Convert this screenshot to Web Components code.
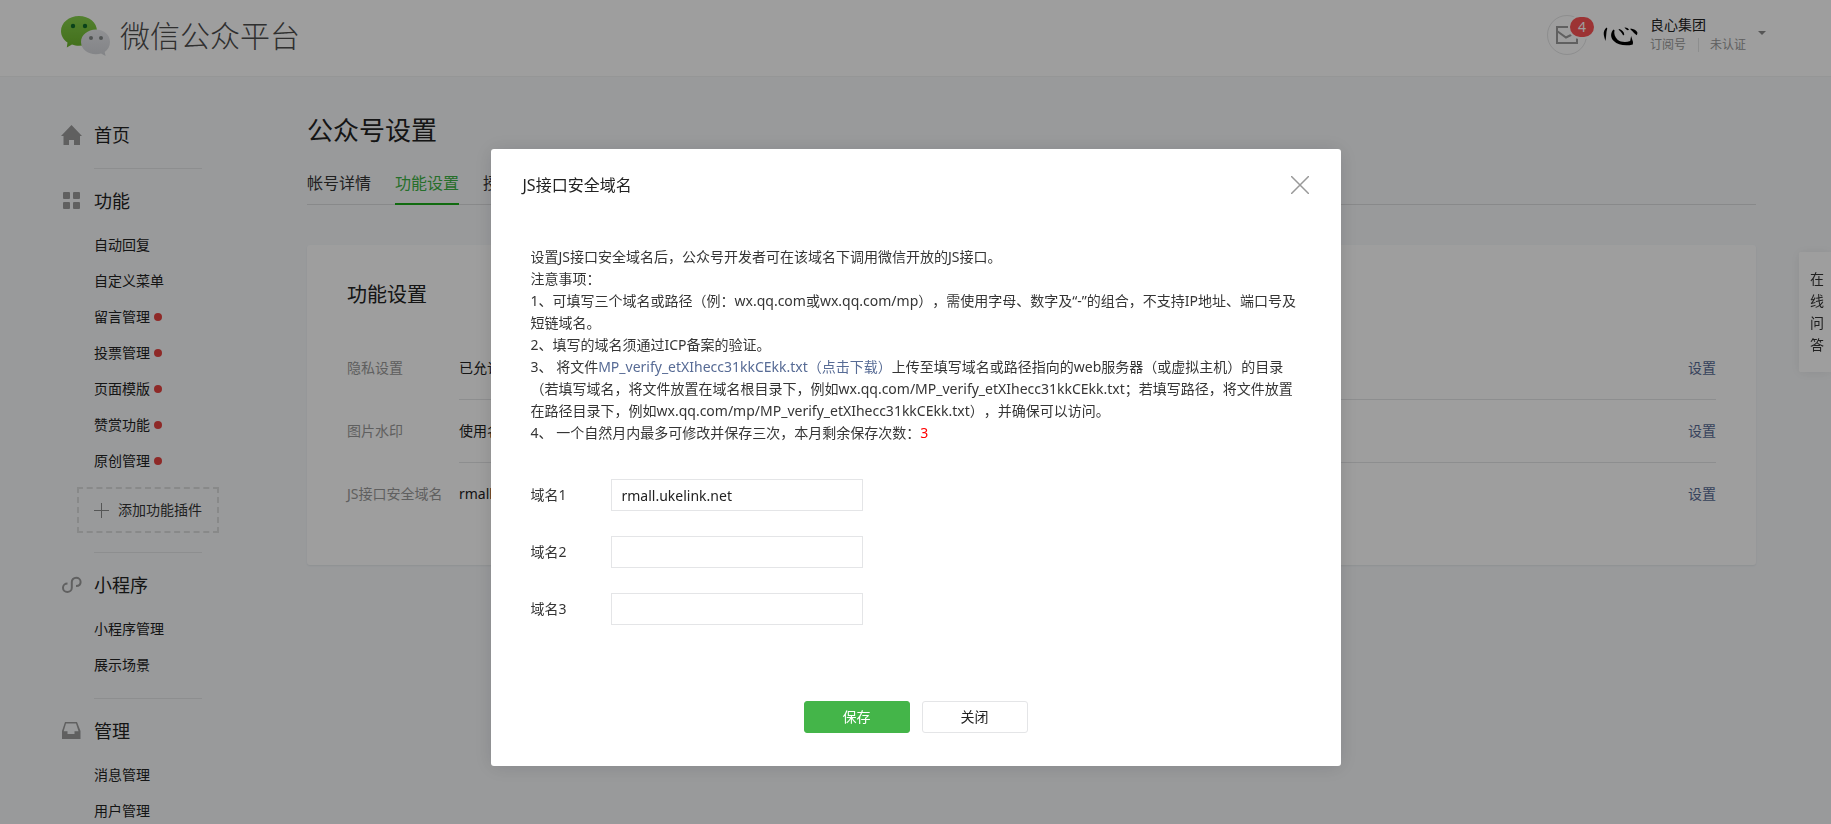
<!DOCTYPE html>
<html lang="zh-CN">
<head>
<meta charset="utf-8">
<title>公众号设置</title>
<style>
  :root {
    --text: #222;
    --body: #353535;
    --muted: #9a9a9a;
    --line: #e4e5e6;
    --green: #44b549;
    --link: #576b95;
  }
  html, body { height: 100%; }
  body {
    margin: 0;
    overflow: hidden;
    background: #f7f9fb;
    color: var(--text);
    font: 14px/22px "Noto Sans", "Noto Sans CJK SC", sans-serif;
    text-spacing-trim: space-all;
  }
</style>
</head>
<body>
<mp-app></mp-app>

<script>
function define(name, html, setup) {
  const template = document.createElement('template');
  template.innerHTML = '<style>*{box-sizing:border-box}a{color:inherit;text-decoration:none}button,input{font:inherit;color:inherit}</style>' + html;
  customElements.define(name, class extends HTMLElement {
    constructor() {
      super();
      this.attachShadow({ mode: 'open' }).append(template.content.cloneNode(true));
    }
    connectedCallback() {
      if (setup) setup(this, this.shadowRoot);
    }
  });
}

/* Product logo with its name */
define('mp-logo', `
  <style>
    :host { display: block; }
    a { display: flex; align-items: center; gap: 9px; color: #4c4c4c; font-size: 30px; line-height: 42px; font-weight: 300; }
    svg { display: block; }
  </style>
  <a href="#">
    <svg width="50" height="41" viewBox="0 0 50 41" aria-hidden="true">
      <defs>
        <linearGradient id="g" x1="0" y1="0" x2="0" y2="1"><stop offset="0" stop-color="#86d04c"/><stop offset="1" stop-color="#6cb52c"/></linearGradient>
        <linearGradient id="w" x1="0" y1="0" x2="0" y2="1"><stop offset="0" stop-color="#e9eaee"/><stop offset="1" stop-color="#d3d5da"/></linearGradient>
      </defs>
      <path d="M18 0C8 0 0 6.700 0 15c0 4.700 2.500 8.800 6.500 11.500L5.800 31.500l5.200-3c2.200.9 4.600 1.300 7 1.300 10 0 18-6.700 18-14.900S28 0 18 0z" fill="url(#g)"/>
      <circle cx="12" cy="10" r="2.200" fill="#116b2a"/><circle cx="24" cy="10" r="2.200" fill="#116b2a"/>
      <path d="M35 13.500c-8.300 0-15 5.600-15 12.400s6.700 12.300 15 12.300c1.800 0 3.500-.2 5.100-.7l4.500 2.500-.9-4.100c3.300-2.300 5.300-5.900 5.300-10 0-6.800-5.700-12.400-14-12.400z" fill="url(#w)"/>
      <circle cx="30" cy="22" r="2" fill="#848888"/><circle cx="40" cy="22" r="2" fill="#848888"/>
    </svg>
    <span>微信公众平台</span>
  </a>`);

/* Message button with an unread count */
define('mp-inbox', `
  <style>
    :host { display: block; position: relative; }
    button { display: block; width: 40px; height: 40px; padding: 0; border: 1px solid #e4e5e6; border-radius: 50%; background: #fff; }
    svg { display: block; margin: 0 auto; }
    span { position: absolute; left: 23px; top: 2px; min-width: 24px; height: 20px; border-radius: 10px; box-shadow: 0 0 0 2px #fff;
      background: #fc5355; color: #fff; font-size: 14px; line-height: 20px; text-align: center; }
  </style>
  <button aria-label="消息">
    <svg width="24" height="20" viewBox="0 0 24 20" fill="none" stroke="#9b9b9b" stroke-width="2">
      <path d="M13 2H2v16h20v-5M2 6l9 6.500L18 9"/>
    </svg>
  </button>
  <span><slot></slot></span>`);

define('mp-account', `
  <style>
    :host { display: flex; align-items: center; }
    .avatar { display: block; margin: 0 12px 0 15px; }
    .name { line-height: 20px; }
    .meta { display: flex; color: var(--muted); font-size: 12px; line-height: 20px; }
    .meta span + span { margin-left: 12px; padding-left: 12px; background: linear-gradient(var(--line), var(--line)) 0 3px / 1px 14px no-repeat; }
    button { align-self: flex-start; margin: 16px 0 0 12px; padding: 0; border: 0; background: none; }
    button svg { display: block; }
  </style>
  <mp-inbox>4</mp-inbox>
  <svg class="avatar" width="36" height="36" viewBox="0 0 36 36" role="img" aria-label="头像">
    <path d="M4.500 10.500C2.500 12 1.300 15 1.800 18l1.500 6C4.600 20.500 3.800 15 5.300 11.500z"/>
    <path d="M11.500 12.500c-3.200 3.200-3.200 8 .3 11.600 4.200 4.200 12.200 5.200 19 3.400l.2-2.500-1.900-6-.9 5c-4.400 1.700-9.700 1.100-12.600-1.300-2.900-2.500-3.800-6-3.100-9.400z"/>
    <path d="M17 12c2.800.8 5 2.600 5.300 5.600l-1.200.9c-.8-1.900-1.900-3.900-4.500-5.800zM22.500 10.500c1.800-.2 3.500.6 4.500 2l-1 .8c-1.200-.3-2.600-1.300-3.500-2.800zM28.500 11.500c3 .2 6 1.900 7 4.200l-.6 2.600c-2-.7-3.500-3.600-6.400-5.700z"/>
  </svg>
  <div>
    <div class="name">良心集团</div>
    <div class="meta"><span>订阅号</span><span>未认证</span></div>
  </div>
  <button aria-label="帐号菜单"><svg width="8" height="4" viewBox="0 0 8 4"><path d="M0 0h8L4 4z" fill="#8b8b8b"/></svg></button>`);

define('mp-header', `
  <style>
    :host { display: flex; justify-content: space-between; height: 77px; padding: 15px 65px 0 61px;
      background: #fff; border-bottom: 1px solid #f0f3f2; box-sizing: border-box; align-items: flex-start; }
  </style>
  <mp-logo></mp-logo>
  <mp-account></mp-account>`);

/* Navigation group: icon and title, then its links */
define('nav-group', `
  <style>
    :host { display: block; padding-top: 19px; }
    a { display: flex; align-items: center; gap: 12px; font-size: 18px; line-height: 26px; }
    a ::slotted(svg) { display: block; flex: none; width: 21px; }
    .links { display: block; margin: 13px 0 0 33px; padding-bottom: 15px; border-bottom: 1px solid #e4e5e7; }
    :host([plain]) .links { margin-top: 0; padding-bottom: 20px; }
    :host([extra]) .links { padding-bottom: 19px; }
  </style>
  <a href="#"><slot name="icon"></slot><span></span></a>
  <div class="links"><slot></slot></div>`,
  (el, root) => { root.querySelector('span').textContent = el.getAttribute('heading'); });

define('nav-link', `
  <style>
    :host { display: block; }
    a { display: flex; align-items: center; gap: 4px; line-height: 36px; }
    :host([unread]) a::after { content: ""; width: 8px; height: 8px; border-radius: 50%; background: #e64340; }
  </style>
  <a href="#"><slot></slot></a>`);

define('nav-add', `
  <style>
    :host { display: block; margin: 8px -17px 0; }
    button { display: flex; align-items: center; gap: 9px; width: 100%; height: 46px; padding: 0 0 0 15px;
      border: 2px dashed #dcddde; background: none; white-space: nowrap; color: #353535; }
    svg { display: block; }
  </style>
  <button><svg width="15" height="15" viewBox="0 0 15 15"><path d="M7 0h1v15H7zM0 7h15v1H0z" fill="#8a8b8c"/></svg><slot></slot></button>`);

define('side-nav', `
  <style>
    :host { display: block; width: 141px; padding-top: 26px; }
  </style>
  <nav>
    <nav-group heading="首页" plain>
      <svg slot="icon" width="21" height="20" viewBox="0 0 21 20" fill="#9b9b9b"><path d="M10.500 0 21 11h-2v9h-6v-5H8v5H2.500v-9H0z"/></svg>
    </nav-group>
    <nav-group heading="功能" extra>
      <svg slot="icon" width="21" height="18" viewBox="0 0 21 18" fill="#9b9b9b"><rect x="2" y="0" width="7" height="7" rx="1"/><rect x="12" y="0" width="7" height="7" rx="1"/><rect x="2" y="10" width="7" height="7" rx="1"/><rect x="12" y="10" width="7" height="7" rx="1"/></svg>
      <nav-link>自动回复</nav-link>
      <nav-link>自定义菜单</nav-link>
      <nav-link unread>留言管理</nav-link>
      <nav-link unread>投票管理</nav-link>
      <nav-link unread>页面模版</nav-link>
      <nav-link unread>赞赏功能</nav-link>
      <nav-link unread>原创管理</nav-link>
      <nav-add>添加功能插件</nav-add>
    </nav-group>
    <nav-group heading="小程序">
      <svg slot="icon" width="21" height="18" viewBox="0 0 21 18" fill="none" stroke="#9b9b9b" stroke-width="2"><path d="M6.500 7.500C4 7.500 2 9.200 2 11.700S4 16 6.300 16s4.500-1.800 4.500-4.200V6c0-2.300 1.800-4.200 4.300-4.200S19.600 3.500 19.600 6s-2 4-4.600 4"/></svg>
      <nav-link>小程序管理</nav-link>
      <nav-link>展示场景</nav-link>
    </nav-group>
    <nav-group heading="管理">
      <svg slot="icon" width="21" height="18" viewBox="0 0 21 18" fill="#9b9b9b"><path fill-rule="evenodd" d="M4 0h12l3.500 9v8H1V9zm1 1.500L2.700 9.200H6.500V12h7V9.200h4L15 1.500z"/></svg>
      <nav-link>消息管理</nav-link>
      <nav-link>用户管理</nav-link>
    </nav-group>
  </nav>`);

define('tab-link', `
  <style>
    :host { display: block; }
    a { display: block; height: 32px; font-size: 16px; line-height: 21px; color: #353535; }
    :host([active]) a { color: #3eb345; border-bottom: 2px solid #1aad19; }
  </style>
  <a href="#"><slot></slot></a>`);

define('setting-row', `
  <style>
    :host { display: flex; line-height: 62px; }
    .label { flex: none; width: 112px; color: var(--muted); }
    .body { flex: 1; display: flex; justify-content: space-between; border-bottom: 1px solid #e4e5e7; }
    :host(:last-of-type) .body { border-color: transparent; }
    a { color: var(--link); }
  </style>
  <span class="label"></span>
  <div class="body"><slot></slot><a href="#">设置</a></div>`,
  (el, root) => { root.querySelector('.label').textContent = el.getAttribute('label'); });

define('settings-page', `
  <style>
    :host { display: block; padding-top: 35px; }
    h1 { margin: 0; font-size: 26px; line-height: 36px; font-weight: 400; }
    .tabs { display: flex; gap: 24px; margin-top: 25px; height: 32px; box-shadow: inset 0 -1px #dcdddf; }
    section { margin-top: 40px; padding: 35px 40px 39px; background: #fff; border-radius: 3px; box-shadow: 0 1px 2px #e4e8eb; }
    h2 { margin: 0 0 27px; font-size: 20px; line-height: 30px; font-weight: 400; }
  </style>
  <h1>公众号设置</h1>
  <nav class="tabs">
    <tab-link>帐号详情</tab-link>
    <tab-link active>功能设置</tab-link>
    <tab-link>授权</tab-link>
  </nav>
  <section>
    <h2>功能设置</h2>
    <setting-row label="隐私设置">已允许</setting-row>
    <setting-row label="图片水印">使用名称</setting-row>
    <setting-row label="JS接口安全域名">rmall.ukelink.net</setting-row>
  </section>`);

define('help-tab', `
  <style>
    :host { display: block; position: fixed; right: 0; top: 252px; }
    button { display: block; width: 32px; padding: 16px 7px 16px 11px; border: 0; border-radius: 2px 0 0 2px;
      background: #fff; box-shadow: 0 1px 12px rgba(0, 0, 0, .08); line-height: 22px; color: #353535; }
  </style>
  <button><slot></slot></button>`);

define('text-field', `
  <style>
    :host { display: flex; align-items: center; }
    label { flex: none; width: 80px; color: var(--body); }
    input { width: 252px; height: 32px; padding: 0 10px; border: 1px solid #e4e5e7; background: #fff; outline: none; }
  </style>
  <label for="input"></label>
  <input id="input" type="text">`,
  (el, root) => {
    root.querySelector('label').textContent = el.getAttribute('label');
    root.querySelector('input').value = el.getAttribute('value') || '';
  });

define('push-button', `
  <style>
    :host { display: block; }
    button { display: block; width: 106px; height: 32px; padding: 0; border: 1px solid #e4e5e7; border-radius: 3px; background: #fff; }
    :host([primary]) button { border-color: var(--green); background: var(--green); color: #fff; }
  </style>
  <button><slot></slot></button>`);

define('modal-dialog', `
  <style>
    :host { display: block; position: fixed; inset: 0; background: rgba(0, 0, 0, .38); overflow: auto; }
    .panel { max-width: 850px; margin: 149px auto 0; background: #fff; border-radius: 3px; box-shadow: 0 1px 20px rgba(0, 0, 0, .13); }
    header { display: flex; justify-content: space-between; align-items: center; height: 72px; padding: 0 32px; }
    h3 { margin: 0; font-size: 16px; line-height: 24px; font-weight: 400; }
    header button { padding: 0; border: 0; background: none; }
    header svg { display: block; }
    .content { padding: 25px 40px 0; }
    footer { display: flex; justify-content: center; gap: 12px; padding: 76px 0 33px; }
  </style>
  <div class="panel" role="dialog" aria-labelledby="title">
    <header>
      <h3 id="title"></h3>
      <button aria-label="关闭"><svg width="18" height="18" viewBox="0 0 18 18"><path d="M0 0l18 18M18 0L0 18" stroke="#999" stroke-width="1.500"/></svg></button>
    </header>
    <div class="content"><slot></slot></div>
    <footer><slot name="action"></slot></footer>
  </div>`,
  (el, root) => { root.querySelector('h3').textContent = el.getAttribute('heading'); });

define('domain-form', `
  <style>
    :host { display: block; }
    p { margin: 0; color: var(--body); }
    a { color: var(--link); }
    em { color: #f00; font-style: normal; }
    form { display: grid; gap: 25px; margin-top: 35px; }
  </style>
  <p>设置JS接口安全域名后，公众号开发者可在该域名下调用微信开放的JS接口。</p>
  <p>注意事项：</p>
  <p>1、可填写三个域名或路径（例：wx.qq.com或wx.qq.com/mp），需使用字母、数字及“-”的组合，不支持IP地址、端口号及短链域名。</p>
  <p>2、填写的域名须通过ICP备案的验证。</p>
  <p>3、 将文件<a href="#">MP_verify_etXIhecc31kkCEkk.txt（点击下载）</a>上传至填写域名或路径指向的web服务器（或虚拟主机）的目录（若填写域名，将文件放置在域名根目录下，例如wx.qq.com/MP_verify_etXIhecc31kkCEkk.txt；若填写路径，将文件放置在路径目录下，例如wx.qq.com/mp/MP_verify_etXIhecc31kkCEkk.txt），并确保可以访问。</p>
  <p>4、 一个自然月内最多可修改并保存三次，本月剩余保存次数：<em>3</em></p>
  <form>
    <text-field label="域名1" value="rmall.ukelink.net"></text-field>
    <text-field label="域名2"></text-field>
    <text-field label="域名3"></text-field>
  </form>`);

define('mp-app', `
  <style>
    :host { display: block; }
    .page { display: grid; grid-template-columns: 141px minmax(0, 1fr); gap: 105px; padding: 0 75px 0 61px; }
  </style>
  <mp-header></mp-header>
  <div class="page">
    <side-nav></side-nav>
    <main><settings-page></settings-page></main>
  </div>
  <help-tab>在线问答</help-tab>
  <modal-dialog heading="JS接口安全域名">
    <domain-form></domain-form>
    <push-button slot="action" primary>保存</push-button>
    <push-button slot="action">关闭</push-button>
  </modal-dialog>`);
</script>
</body>
</html>
